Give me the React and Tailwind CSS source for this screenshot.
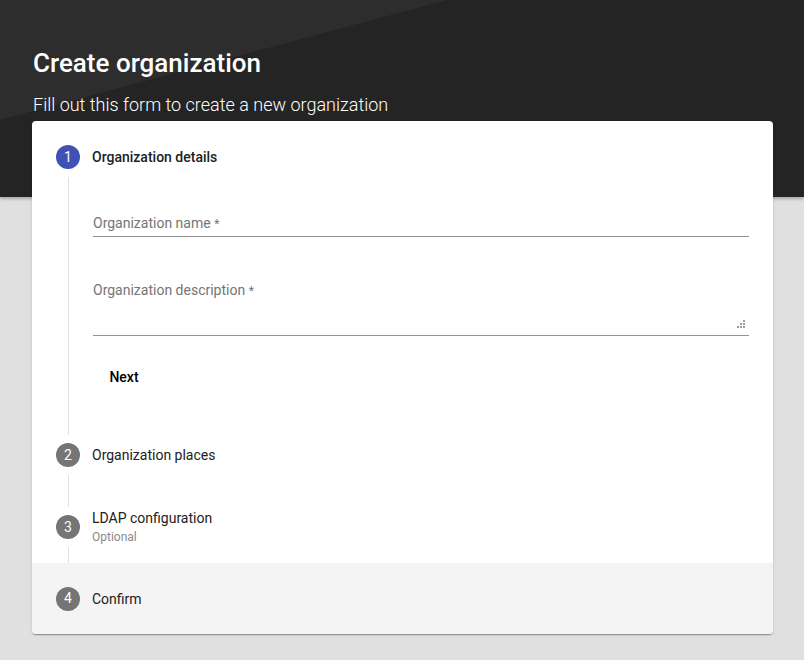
export default function App() {
  const steps = [
    { n: 2, label: "Organization places" },
    { n: 3, label: "LDAP configuration", sub: "Optional" },
    { n: 4, label: "Confirm", hover: true },
  ];

  return (
    <div className="min-h-screen bg-[#e0e0e0] pb-[26px] font-['Roboto','Liberation_Sans',sans-serif]">
      {/* Dark banner */}
      <div className="relative h-[197px] bg-[#242424] shadow-[0_2px_3px_rgba(0,0,0,0.25)]">
        <svg className="absolute inset-0 h-full w-full" viewBox="0 0 804 197" preserveAspectRatio="none">
          <polygon points="0,0 447,0 0,120" fill="#2d2d2d" />
        </svg>
        <div className="relative px-[33px] pt-[47px]">
          <h1 className="text-[26px] font-medium leading-[32px] text-white">Create organization</h1>
          <p className="mt-[14px] text-[18px] font-light leading-[24px] text-white">
            Fill out this form to create a new organization
          </p>
        </div>
      </div>

      {/* Stepper card */}
      <div className="relative z-10 mt-[-76px] ml-[32px] mr-[31px] overflow-hidden rounded bg-white shadow-[0_2px_1px_-1px_rgba(0,0,0,0.2),0_1px_1px_0_rgba(0,0,0,0.14),0_1px_3px_0_rgba(0,0,0,0.12)]">
        {/* Step 1 */}
        <div className="relative">
          <div className="flex h-[72px] items-center px-6">
            <div className="flex h-6 w-6 items-center justify-center rounded-full bg-[#3f51b5] text-[14px] text-white">1</div>
            <div className="ml-3 text-[14px] font-medium text-[#212121]">Organization details</div>
          </div>
          <div className="absolute left-[36px] top-[56px] bottom-[-16px] w-px bg-[#e0e0e0]" />
          <div className="ml-[36px] pl-[25px] pr-6 pb-6">
            <div className="pt-[21px]">
              <div className="border-b border-[#949494] pb-[3px]">
                <div className="text-[14px] leading-[18px] text-[#757575]">
                  Organization name <span className="text-[12px]">*</span>
                </div>
              </div>
            </div>
            <div className="mt-[44px]">
              <div className="relative h-[55px] border-b border-[#949494]">
                <div className="text-[14px] leading-[18px] text-[#757575]">
                  Organization description <span className="text-[12px]">*</span>
                </div>
                <svg className="absolute right-[4px] bottom-[7px]" width="8" height="8" viewBox="0 0 8 8">
                  <rect x="6" y="0" width="2" height="2" fill="#9e9e9e" />
                  <rect x="3" y="3" width="2" height="2" fill="#9e9e9e" />
                  <rect x="6" y="3" width="2" height="2" fill="#9e9e9e" />
                  <rect x="0" y="6" width="2" height="2" fill="#9e9e9e" />
                  <rect x="3" y="6" width="2" height="2" fill="#9e9e9e" />
                  <rect x="6" y="6" width="2" height="2" fill="#9e9e9e" />
                </svg>
              </div>
            </div>
            <button className="ml-[-1px] mt-[23px] h-9 min-w-[64px] rounded px-4 text-[14px] font-medium text-black">Next</button>
          </div>
        </div>

        {steps.map((s, i) => (
          <div key={s.n} className={"relative " + (s.hover ? "bg-[#f4f4f4]" : "")}>
            <div className={"flex items-center px-6 " + (s.hover ? "h-[71px]" : "h-[72px]")}>
              <div className="flex h-6 w-6 items-center justify-center rounded-full bg-[#757575] text-[14px] text-white">{s.n}</div>
              <div className="ml-3">
                <div className="text-[14px] leading-[16px] text-[#212121]">{s.label}</div>
                {s.sub && <div className="mt-[3px] text-[12px] leading-[16px] text-[#8a8a8a]">{s.sub}</div>}
              </div>
            </div>
            {i < steps.length - 1 && (
              <div className="absolute left-[36px] top-[56px] bottom-[-16px] w-px bg-[#e0e0e0]" />
            )}
          </div>
        ))}
      </div>
    </div>
  );
}
